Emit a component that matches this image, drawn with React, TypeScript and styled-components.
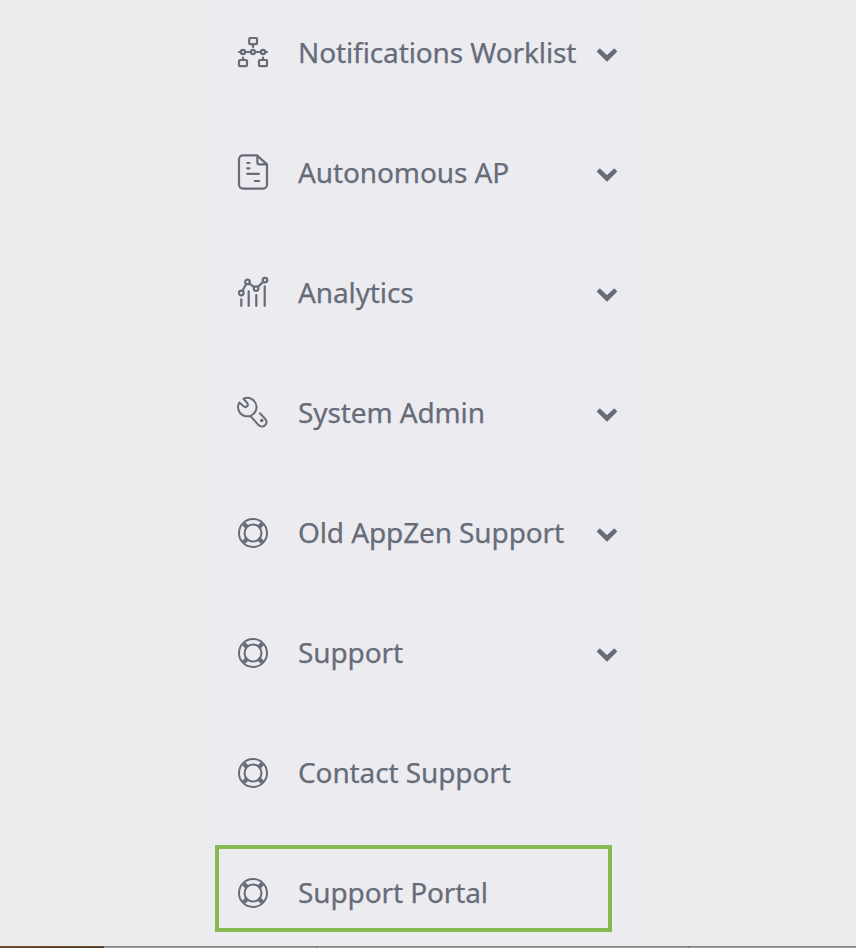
import React from "react";
import styled, { createGlobalStyle } from "styled-components";

const GlobalStyle = createGlobalStyle`
  * { box-sizing: border-box; }
  body { margin: 0; background: #ebebeb; }
`;

const Page = styled.div`
  height: 948px;
  display: flex;
  flex-direction: column;
  overflow: hidden;
  background: #ebebeb;
`;

const Sidebar = styled.nav`
  flex: 1;
  min-height: 0;
  width: 438px;
  margin-left: 206px;
  background: #ecebf0;
`;

const Menu = styled.ul`
  list-style: none;
  margin: -7px 0 0;
  padding: 0;
`;

const Item = styled.li`
  position: relative;
  display: flex;
  align-items: center;
  height: 120px;
  padding: 0 22px 0 27px;
  color: #676c79;
`;

const Label = styled.span`
  flex: 1;
  margin-left: 25px;
  padding-bottom: 2px;
  font: 400 28px/40px "Noto Sans", sans-serif;
  letter-spacing: -0.11px;
  -webkit-text-stroke: 0.25px currentColor;
  white-space: nowrap;
`;

const Icon = styled.svg`
  flex: none;
  width: 40px;
  height: 40px;
  fill: none;
  stroke: currentColor;
  stroke-width: 2.2;
  stroke-linecap: round;
  stroke-linejoin: round;
`;

const Arrow = styled.svg`
  flex: none;
  width: 30px;
  height: 20px;
  margin-top: 2px;
  fill: currentColor;
  stroke: currentColor;
  stroke-width: 1.6;
  stroke-linejoin: round;
`;

const Highlight = styled.div`
  position: absolute;
  left: 9px;
  top: 12px;
  width: 397px;
  height: 87px;
  border: 4px solid #87b953;
`;

const BottomStrip = styled.div`
  display: flex;
  flex: none;
  height: 2px;
`;

const StripPart = styled.div<{ $width?: number; $dark?: boolean }>`
  width: ${(p) => (p.$width ? `${p.$width}px` : "auto")};
  flex: ${(p) => (p.$width ? "none" : 1)};
  background: ${(p) => (p.$dark ? "linear-gradient(90deg, #67482e, #493222)" : "#a0a0a0")};
  border-top: 1px solid ${(p) => (p.$dark ? "#685039" : "#858585")};
`;

const Seam = styled.div`
  width: 2px;
  background: #808080;
`;

const icons = {
  workflow: (
    <>
      <rect x="16.2" y="5" width="7.8" height="6.2" rx="1" />
      <rect x="6" y="27" width="8" height="6.2" rx="1" />
      <rect x="26" y="27" width="8" height="6.2" rx="1" />
      <path d="M20 11v3M10 24.5V27M30 24.5V27M6 19h1.5M12.5 19h5M22.5 19h5M32.5 19H34" />
      <circle cx="10" cy="19" r="2.1" />
      <circle cx="20" cy="19" r="2.1" />
      <circle cx="30" cy="19" r="2.1" />
    </>
  ),
  document: (
    <>
      <path d="M24 2.4H10a4 4 0 0 0-4 4v25.2a4 4 0 0 0 4 4h20a4 4 0 0 0 4-4V11.4zM24.4 2.8v6.6a2 2 0 0 0 2 2H34" />
      <path d="M14.2 10h2.3M14.2 15.3h2.3M14.2 20.8H26M21.8 28h4.4" />
    </>
  ),
  chart: (
    <>
      <path d="m9.5 17.8 3.6-6.8M16.3 10.3l4.7 3.8M24.9 13.9l5.2-5" />
      <circle cx="8.3" cy="20" r="2.3" />
      <circle cx="14.5" cy="8.9" r="2.3" />
      <circle cx="23.1" cy="15.6" r="2.3" />
      <circle cx="32" cy="7.1" r="2.3" />
      <path d="M8.3 26.3V33M15.7 18.3V33M23.3 22V33M31.7 13.3V33" />
    </>
  ),
  wrench: (
    <>
      <path
        strokeWidth="2"
        d="M6.3 9.6l4.3 3.7c2.6 2.1 5.6-.9 3.5-3.5L10.4 5.8A9.2 9.2 0 1 1 6.3 9.6M17.3 22.9l8 8.9c4.6 4.8 11.2-1.5 6.8-6.1l-5.2-5.5"
      />
      <circle cx="28.7" cy="27.5" r="1.7" fill="currentColor" stroke="none" />
    </>
  ),
  lifebuoy: (
    <>
      <circle cx="20" cy="20" r="14" strokeWidth="2" />
      <circle cx="20" cy="20" r="8.5" strokeWidth="2" />
      <path strokeLinecap="butt" strokeWidth="4.4" d="m10.7 10.7 3.5 3.5M29.3 10.7l-3.5 3.5M10.7 29.3l3.5-3.5M29.3 29.3l-3.5-3.5" />
    </>
  ),
};

interface Entry {
  label: string;
  icon: keyof typeof icons;
  expandable?: boolean;
  highlighted?: boolean;
}

const entries: Entry[] = [
  { label: "Notifications Worklist", icon: "workflow", expandable: true },
  { label: "Autonomous AP", icon: "document", expandable: true },
  { label: "Analytics", icon: "chart", expandable: true },
  { label: "System Admin", icon: "wrench", expandable: true },
  { label: "Old AppZen Support", icon: "lifebuoy", expandable: true },
  { label: "Support", icon: "lifebuoy", expandable: true },
  { label: "Contact Support", icon: "lifebuoy" },
  { label: "Support Portal", icon: "lifebuoy", highlighted: true },
];

export default function App() {
  return (
    <>
      <GlobalStyle />
      <Page>
        <Sidebar>
          <Menu>
            {entries.map((e) => (
              <Item key={e.label}>
                <Icon viewBox="0 0 40 40">{icons[e.icon]}</Icon>
                <Label>{e.label}</Label>
                {e.expandable && (
                  <Arrow viewBox="0 0 30 20">
                    <path d="M7.7 5.4l7.3 6.8 7.3-6.8 2 2.1L15 16.6 5.7 7.5z" />
                  </Arrow>
                )}
                {e.highlighted && <Highlight />}
              </Item>
            ))}
          </Menu>
        </Sidebar>
        <BottomStrip>
          <StripPart $width={104} $dark />
          <StripPart $width={212} />
          <Seam />
          <StripPart $width={370} />
          <Seam />
          <StripPart />
        </BottomStrip>
      </Page>
    </>
  );
}
